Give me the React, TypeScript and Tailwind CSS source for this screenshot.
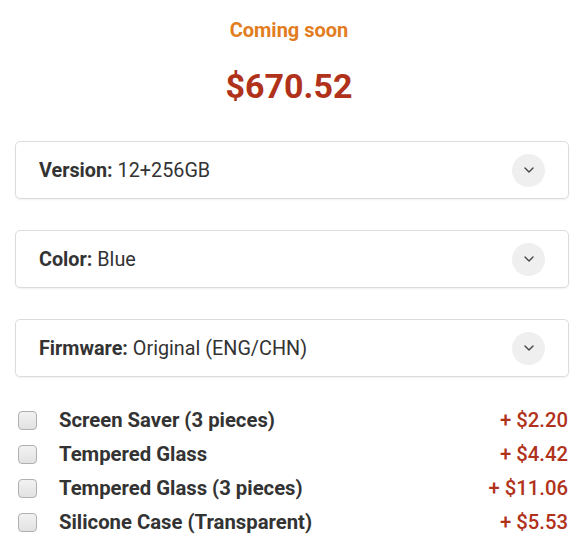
import { ChevronDown } from "lucide-react"

const OPTIONS = [
  { label: "Version:", value: "12+256GB" },
  { label: "Color:", value: "Blue" },
  { label: "Firmware:", value: "Original (ENG/CHN)" },
]

const ADDONS = [
  { name: "Screen Saver (3 pieces)", price: "+ $2.20" },
  { name: "Tempered Glass", price: "+ $4.42" },
  { name: "Tempered Glass (3 pieces)", price: "+ $11.06" },
  { name: "Silicone Case (Transparent)", price: "+ $5.53" },
]

export default function App() {
  return (
    <div className="w-[578px] h-[553px] bg-white font-['Roboto',sans-serif] overflow-hidden">
      <div className="pt-[16px] text-center text-[20px] font-bold text-[#e27d1f] leading-[28px]">
        Coming soon
      </div>
      <div className="mt-[22px] text-center text-[34px] font-bold text-[#b1321b] leading-[40px]">
        $670.52
      </div>

      <div className="mt-[35px] ml-[15px] mr-[9px] flex flex-col gap-[31px]">
        {OPTIONS.map((o) => (
          <div
            key={o.label}
            className="h-[58px] rounded-[5px] border border-[#dcdcdc] shadow-[0_1px_2px_rgba(0,0,0,0.06)] flex items-center justify-between pl-[23px] pr-[23px]"
          >
            <div className="text-[19.8px] text-[#333] pt-[1px]">
              <span className="font-bold">{o.label}</span> {o.value}
            </div>
            <div className="w-[33px] h-[33px] rounded-full bg-[#efefef] flex items-center justify-center">
              <ChevronDown size={16} strokeWidth={2} className="text-[#444]" />
            </div>
          </div>
        ))}
      </div>

      <div className="mt-[32px] ml-[18px] mr-[10px] flex flex-col gap-[11px]">
        {ADDONS.map((a) => (
          <div key={a.name} className="h-[23px] flex items-center justify-between">
            <div className="flex items-center">
              <div className="w-[19px] h-[19px] rounded-[4px] border border-[#b0b0b0] bg-gradient-to-b from-[#f2f2f2] to-[#e2e2e2]" />
              <span className="ml-[22px] text-[20.3px] font-bold text-[#333]">{a.name}</span>
            </div>
            <span className="text-[20.3px] font-medium text-[#b1321b]">{a.price}</span>
          </div>
        ))}
      </div>
    </div>
  )
}
